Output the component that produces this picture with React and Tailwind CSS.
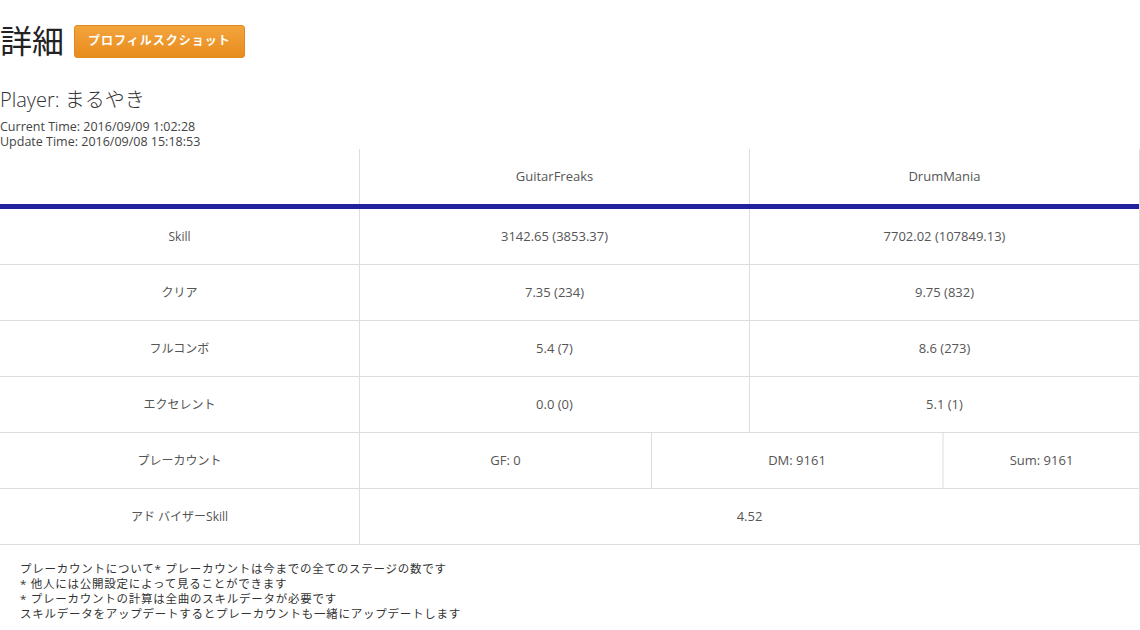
import React from 'react';

const font = { fontFamily: '"Open Sans", "Noto Sans CJK JP", sans-serif' };

const rows = [
  { label: 'Skill', gf: '3142.65 (3853.37)', dm: '7702.02 (107849.13)' },
  { label: 'クリア', gf: '7.35 (234)', dm: '9.75 (832)' },
  { label: 'フルコンボ', gf: '5.4 (7)', dm: '8.6 (273)' },
  { label: 'エクセレント', gf: '0.0 (0)', dm: '5.1 (1)' },
];

export default function App() {
  return (
    <div className="w-[1140px] h-[630px] bg-white text-[#333] overflow-hidden" style={font}>
      {/* Title */}
      <div className="flex items-center h-[50px] mt-[16px]">
        <h1 className="text-[32px] leading-none text-[#222] font-normal">詳細</h1>
        <button className="ml-[10px] h-[33px] px-[13px] rounded-[3px] border border-[#e08a1e] bg-gradient-to-b from-[#f3a43c] to-[#e88c1c] text-white text-[12px] font-bold tracking-[1px]">
          プロフィルスクショット
        </button>
      </div>

      <div className="mt-[21px] text-[20px] leading-[26px] font-light text-[#333]">Player: まるやき</div>
      <div className="mt-[6px] text-[12.5px] leading-[15px] text-[#444]">
        <div>Current Time: 2016/09/09 1:02:28</div>
        <div>Update Time: 2016/09/08 15:18:53</div>
      </div>

      {/* Table */}
      <div className="w-[1140px] border-r border-[#ddd] text-[13px] text-[#555]">
        <div className="flex h-[55px]">
          <div className="w-[360px] border-r border-[#ddd]" />
          <div className="w-[390px] border-r border-[#ddd] flex items-center justify-center">GuitarFreaks</div>
          <div className="flex-1 flex items-center justify-center">DrumMania</div>
        </div>
        <div className="h-[5px] bg-[#22229c]" />
        {rows.map((r) => (
          <div key={r.label} className="flex h-[56px] border-b border-[#ddd]">
            <div className="w-[360px] border-r border-[#ddd] flex items-center justify-center text-[12px]">{r.label}</div>
            <div className="w-[390px] border-r border-[#ddd] flex items-center justify-center">{r.gf}</div>
            <div className="flex-1 flex items-center justify-center">{r.dm}</div>
          </div>
        ))}
        <div className="flex h-[56px] border-b border-[#ddd]">
          <div className="w-[360px] border-r border-[#ddd] flex items-center justify-center text-[12px]">プレーカウント</div>
          <div className="w-[292px] border-r border-[#ddd] flex items-center justify-center">GF: 0</div>
          <div className="w-[292px] border-r-2 border-[#eee] flex items-center justify-center">DM: 9161</div>
          <div className="flex-1 flex items-center justify-center">Sum: 9161</div>
        </div>
        <div className="flex h-[56px] border-b border-[#ddd]">
          <div className="w-[360px] border-r border-[#ddd] flex items-center justify-center text-[12px]">アド バイザーSkill</div>
          <div className="flex-1 flex items-center justify-center">4.52</div>
        </div>
      </div>

      <div className="mt-[16px] ml-[20px] text-[11.5px] leading-[15px] tracking-[0.75px] text-[#333]">
        <div>プレーカウントについて* プレーカウントは今までの全てのステージの数です</div>
        <div>* 他人には公開設定によって見ることができます</div>
        <div>* プレーカウントの計算は全曲のスキルデータが必要です</div>
        <div>スキルデータをアップデートするとプレーカウントも一緒にアップデートします</div>
      </div>
    </div>
  );
}
